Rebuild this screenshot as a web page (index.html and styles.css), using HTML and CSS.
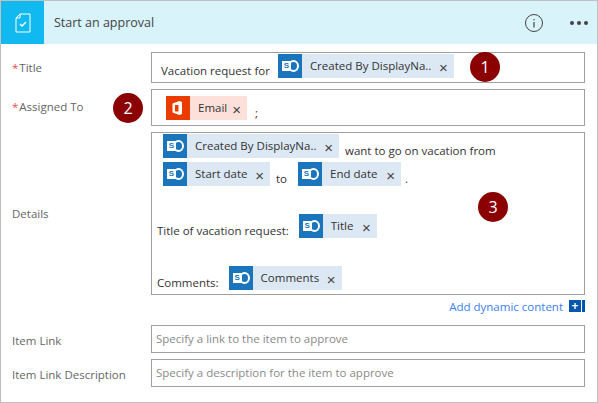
FILE: index.html
```html
<html>
<head>
    <link rel="stylesheet" href="styles.css">
    <title>Start an approval</title>
</head>
<body>
<div class="card">
    <div class="header">
        <div class="header-icon">
            <svg width="16" height="20" viewBox="0 0 16 20">
                <path d="M5 1h10v18H1V5z M5 1v4H1" fill="none" stroke="#fff" stroke-width="1"/>
                <path d="M5 11l2 2 4-4" fill="none" stroke="#fff" stroke-width="1.300"/>
            </svg>
        </div>
        <div class="header-title">Start an approval</div>
        <svg class="info" width="20" height="20" viewBox="0 0 20 20">
            <circle cx="10" cy="10" r="8.500" fill="none" stroke="#444" stroke-width="1"/>
            <path d="M10 6v1.200M10 9v5.500" stroke="#444" stroke-width="1.200"/>
        </svg>
        <div class="dots"><i></i><i></i><i></i></div>
    </div>

    <div class="form">
        <div class="row">
            <div class="label"><span class="req">*</span>Title</div>
            <div class="field field-title">
                <span class="text">Vacation request for</span>
                <span class="chip chip-a">
                    <span class="sp"><i></i><b>S</b></span>
                    <span class="chip-name">Created By DisplayNa..</span><span class="x">×</span>
                </span>
            </div>
        </div>

        <div class="row">
            <div class="label label-assigned"><span class="req">*</span>Assigned To</div>
            <div class="field field-assigned">
                <span class="chip chip-o">
                    <svg class="office" viewBox="0 0 24 24">
                        <path d="M6.500 7.500 13.500 5 16 6v12l-2.500 1-7-2.500z" fill="#fff"/>
                        <path d="M9 9h3.500v6.500H9z" fill="#eb3c00"/>
                    </svg>
                    <span class="chip-name">Email</span><span class="x">×</span>
                </span>
                <span class="text semi">;</span>
            </div>
        </div>

        <div class="row">
            <div class="label label-mid">Details</div>
            <div class="field field-details">
                <div class="line indent">
                    <span class="chip chip-a">
                        <span class="sp"><i></i><b>S</b></span>
                        <span class="chip-name">Created By DisplayNa..</span><span class="x">×</span>
                    </span>
                    <span class="text">want to go on vacation from</span>
                </div>
                <div class="line indent">
                    <span class="chip chip-start">
                        <span class="sp"><i></i><b>S</b></span>
                        <span class="chip-name">Start date</span><span class="x">×</span>
                    </span>
                    <span class="text to">to</span>
                    <span class="chip chip-end">
                        <span class="sp"><i></i><b>S</b></span>
                        <span class="chip-name">End date</span><span class="x">×</span>
                    </span>
                    <span class="text">.</span>
                </div>
                <div class="line spaced">
                    <span class="text">Title of vacation request:</span>
                    <span class="chip chip-title">
                        <span class="sp"><i></i><b>S</b></span>
                        <span class="chip-name">Title</span><span class="x">×</span>
                    </span>
                </div>
                <div class="line spaced">
                    <span class="text">Comments:</span>
                    <span class="chip chip-comments">
                        <span class="sp"><i></i><b>S</b></span>
                        <span class="chip-name">Comments</span><span class="x">×</span>
                    </span>
                </div>
            </div>
        </div>

        <div class="dynamic">
            <a class="dynamic-link">Add dynamic content</a>
            <span class="plus">+</span><span class="plus-bar"></span>
        </div>

        <div class="row row-link">
            <div class="label">Item Link</div>
            <div class="field field-input">Specify a link to the item to approve</div>
        </div>
        <div class="row">
            <div class="label">Item Link Description</div>
            <div class="field field-input">Specify a description for the item to approve</div>
        </div>
    </div>

    <div class="badge badge-1">1</div>
    <div class="badge badge-2">2</div>
    <div class="badge badge-3">3</div>
</div>
</body>
</html>
```

FILE: styles.css
```css
body {
    margin: 0;
    font-family: "Open Sans", "Noto Sans", sans-serif;
    font-size: 11.5px;
    color: #333;
    background: #fff;
}

.card {
    position: relative;
    width: 596px;
    height: 401px;
    border: 1px solid #c0c0c0;
    overflow: hidden;
}

.header {
    display: flex;
    align-items: center;
    height: 43px;
    background: #d9f3fb;
}

.header-icon {
    display: flex;
    align-items: center;
    justify-content: center;
    width: 43px;
    height: 43px;
    background: #11b9f1;
}

.header-title {
    flex: 1;
    margin-left: 10px;
    font-size: 12.5px;
    color: #444;
}

.info {
    margin-right: 26px;
}

.dots {
    display: flex;
    gap: 3px;
    margin-right: 9px;
}

.dots i {
    width: 4px;
    height: 4px;
    border-radius: 50%;
    background: #444;
}

.form {
    padding: 8px 12px 0 11px;
}

.row {
    display: flex;
    margin-bottom: 6px;
}

.row-link {
    margin-top: 11px;
}

.label {
    width: 139px;
    flex: none;
    padding-top: 8px;
    color: #666;
    white-space: nowrap;
}

.label-assigned {
    padding-top: 10px;
}

.label-mid {
    padding-top: 74px;
}

.req {
    color: #e8505b;
    margin-right: 1px;
}

.field {
    flex: 1;
    box-sizing: border-box;
    border: 1px solid #a0a0a0;
    background: #fff;
}

.field-title {
    display: flex;
    align-items: flex-start;
    height: 31px;
    padding: 1px 0 0 9px;
}

.field-assigned {
    display: flex;
    align-items: flex-start;
    height: 37px;
    padding: 6px 0 0 14px;
}

.field-details {
    height: 163px;
    padding: 1px 0 0 5px;
}

.field-input {
    height: 28px;
    line-height: 26px;
    padding-left: 4px;
    color: #8a8a8a;
}

.line {
    display: flex;
    align-items: flex-start;
    height: 24px;
    margin-bottom: 4px;
    white-space: nowrap;
}

.indent {
    padding-left: 6px;
}

.spaced {
    margin-top: 28px;
}

.text {
    padding-top: 9px;
    line-height: 16px;
    margin-right: 6px;
}

.field-title .text {
    margin-right: 8px;
}

.semi {
    margin-left: 8px;
}

.to {
    margin-right: 11px;
}

.chip {
    display: flex;
    flex: none;
    align-items: center;
    height: 24px;
    background: #dce8f4;
    line-height: 24px;
}

.sp {
    position: relative;
    width: 24px;
    height: 24px;
    flex: none;
    background: #1b75bc;
}

.sp i {
    position: absolute;
    left: 10px;
    top: 6px;
    box-sizing: border-box;
    width: 11px;
    height: 12px;
    border: 2px solid #fff;
    border-radius: 50%;
}

.sp b {
    position: absolute;
    left: 4px;
    top: 7px;
    width: 9px;
    height: 10px;
    background: #fff;
    color: #1b75bc;
    font-family: "Liberation Sans", sans-serif;
    font-size: 8px;
    line-height: 10px;
    text-align: center;
}

.office {
    width: 24px;
    height: 24px;
    flex: none;
    background: #eb3c00;
}

.chip-o {
    width: 81px;
    background: #fde0d9;
}

.chip-a { width: 176px; margin-right: 6px; }
.chip-start { width: 107px; margin-right: 6px; }
.chip-end { width: 103px; margin-right: 4px; }
.chip-title { width: 78px; margin-left: 4px; }
.chip-comments { width: 113px; margin-left: 4px; }

.chip-name {
    flex: 1;
    margin-left: 8px;
}

.x {
    padding-top: 4px;
    margin-right: 6px;
    font-family: "Liberation Sans", sans-serif;
    font-size: 15px;
    color: #444;
}

.dynamic {
    display: flex;
    align-items: center;
    justify-content: flex-end;
    height: 16px;
    margin-top: -3px;
}

.dynamic-link {
    color: #3a7ff0;
    margin-right: 6px;
}

.plus {
    width: 12px;
    height: 12px;
    background: #0058ad;
    color: #fff;
    font-size: 12px;
    font-weight: bold;
    line-height: 11px;
    text-align: center;
}

.plus-bar {
    width: 3px;
    height: 12px;
    margin-left: 1px;
    background: #0058ad;
}

.badge {
    position: absolute;
    width: 30px;
    height: 30px;
    border-radius: 50%;
    background: #8b0000;
    color: #fff;
    font-size: 16px;
    line-height: 30px;
    text-align: center;
}

.badge-1 { left: 469px; top: 51px; }
.badge-2 { left: 112px; top: 92px; }
.badge-3 { left: 477px; top: 191px; }
```
